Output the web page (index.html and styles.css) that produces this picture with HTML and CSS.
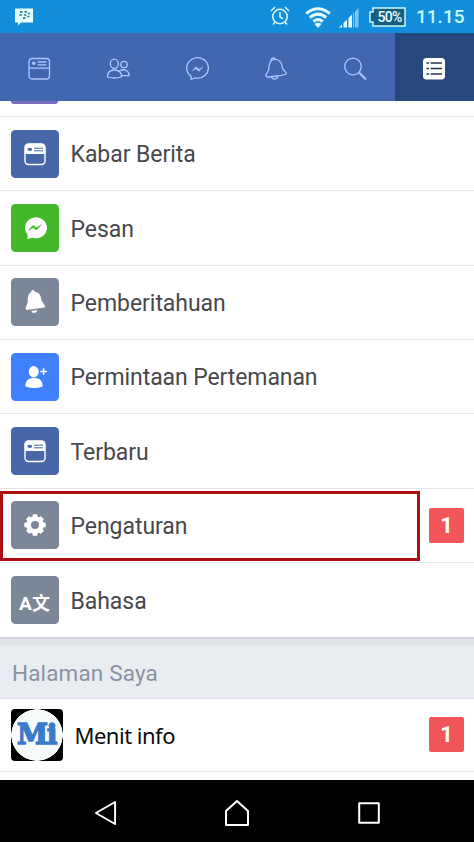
FILE: index.html
```html
<!DOCTYPE html>
<html lang="id">
<head>
<meta charset="utf-8">
<title>Menu</title>
<link rel="stylesheet" href="styles.css">
</head>
<body>
<svg class="defs" aria-hidden="true">
  <defs>
    <symbol id="feed" viewBox="0 0 24 24">
      <rect x="2" y="2" width="20" height="20.5" rx="3.5" fill="none" stroke="#fff" stroke-width="1.4"/>
      <path d="M1.800 12V5.500a3.700 3.700 0 0 1 3.700-3.700h13a3.700 3.700 0 0 1 3.700 3.700V12z" fill="#fff"/>
      <ellipse cx="6.800" cy="7.300" rx="2.400" ry="1.600" fill="#4867a8"/>
      <path d="M11 6.200h9M11 8.800h9" stroke="#4867a8" stroke-width="1"/>
    </symbol>
  </defs>
</svg>
<div class="screen">
  <div class="status">
    <svg class="bbm" viewBox="0 0 18 18"><path d="M0 .5h18v14H6L3 17.500v-3H0z" fill="#e6ffff"/><path d="M5 3.800h2.500M9.500 3.800H12M4.300 7h2.500M8.800 7h2.500M8 10.200h2.500M12.700 5.500h2.200M12.200 8.500h2.200" stroke="#237f9d" stroke-width="1.700"/></svg>
    <svg class="alarm" viewBox="0 0 20 20"><g fill="none" stroke="#d9fbff" stroke-width="1.500"><circle cx="10" cy="10.500" r="7.200"/><path d="M10 6v4.800l3 2M1 5l4-4M15 1l4 4M5 16l-2 2.500M15 16l2 2.500"/></g></svg>
    <svg class="wifi" viewBox="0 0 26 21"><g fill="none" stroke="#e2fdff" stroke-width="3"><path d="M1.200 6.500Q13-3 24.800 6.500M4.800 10.500q8.200-6.800 16.400 0M8.300 14.500q4.700-4 9.400 0"/></g><path d="M9.500 17q3.500-3 7 0L13 21z" fill="#e2fdff"/></svg>
    <svg class="signal" viewBox="0 0 20 20"><path d="M0 19.500l3-3v3zM4.500 15l3.500-3.500v8H4.500zM9.500 10l3.500-3.500v13H9.500z" fill="#e2fdff"/><path d="M14 5.500L15.200 4.300V19.500H14zM16 3.500L19.500 0v19.500H16z" fill="#7bc4ee"/></svg>
    <span class="battery"><svg viewBox="0 0 37 20"><path d="M4 1h32v18H4v-4H1V5h3z" fill="#155f83" stroke="#c9f6f5" stroke-width="1.500"/></svg><b>50%</b></span>
    <span class="clock">11.15</span>
  </div>
  <div class="tabs">
    <div class="tab"><svg viewBox="0 0 24 24"><rect x="2" y="1.500" width="20.500" height="20.500" rx="3"/><path d="M2 11.200h20.500M10.800 5h8.500M10.800 7.800h8.500"/><circle cx="6.800" cy="6.300" r="1.700" class="solid"/></svg></div>
    <div class="tab"><svg viewBox="0 0 24 24"><ellipse cx="8.300" cy="6.800" rx="4" ry="4.600"/><circle cx="18" cy="7.500" r="3.200"/><path d="M1.500 20c0-4.500 2.500-7 7-7s7 2.500 7 7q-7 2-14 0zM13.500 13.500c5.500-2 9.500.2 9.700 5.200h-7.500"/></svg></div>
    <div class="tab"><svg viewBox="0 0 24 24"><path d="M6 22.300v-3.200A10.800 10.200 0 1 1 10.500 21z"/><path d="M6.500 14.500l4.500-5 3 2.500 4.500-2.500-4.500 5-3-2.500z" class="solid"/></svg></div>
    <div class="tab"><svg viewBox="0 0 24 24"><path d="M8.500 3c5.500-2 9.300 1.500 10 8.500l3.700 4.300c.5 2-1.700 2-4.700 2.500L4.500 20c-2.300.3-3.300-1.500-2-3l2.300-4.500C5 7 5.500 4 8.500 3zM7 3.300C7 .5 11 .3 11.500 2.500M7.500 20c1 3 6 2.500 6.300-1"/></svg></div>
    <div class="tab"><svg viewBox="0 0 24 24"><circle cx="10" cy="9.500" r="8.300"/><path d="M16 15.500l7 7" stroke-width="2"/></svg></div>
    <div class="tab active"><svg viewBox="0 0 24 24"><rect x="1" y="1" width="22" height="21.500" rx="3.500" class="plate"/><path d="M8.500 6H20M8.500 11.500H20M8.500 17H20M4.500 6H7M4.500 11.500H7M4.500 17H7" class="lines"/></svg></div>
  </div>
  <div class="peek"><span></span></div>
  <div class="row"><span class="tile blue"><svg class="feedic"><use href="#feed"/></svg></span><span class="label">Kabar Berita</span></div>
  <div class="row"><span class="tile green"><svg viewBox="0 0 24 24"><path d="M4.500 23v-4.500A11 10.500 0 1 1 9.500 21.800z" fill="#fff"/><path d="M5.500 14.200l4.500-4.700 3.200 2.300 5-2.800-5 4.900-3-2.400z" fill="#42b72a" stroke="#42b72a" stroke-width=".6"/></svg></span><span class="label">Pesan</span></div>
  <div class="row"><span class="tile gray"><svg viewBox="0 0 24 24"><path d="M8.300 2C8-.5 11.500-.5 11.600 1.700c4.800.6 6.400 4 6.900 8.800l3.500 5.300-.3 1.700L3.500 20l-1-1.500 2.200-6.300C4.700 6.500 5 3.500 8.300 2zM8.300 21l6-1c-.3 3.500-5 4-6 1z" fill="#fff"/></svg></span><span class="label">Pemberitahuan</span></div>
  <div class="row"><span class="tile bright"><svg viewBox="0 0 24 24"><ellipse cx="10.700" cy="6.800" rx="5" ry="5.700" fill="#fff"/><path d="M2.300 21.500c0-6 3.200-8.500 8.700-8.500s8.700 2.500 8.700 8.500q-8.700 3-17.400 0z" fill="#fff"/><path d="M17.200 6.500H24M20.600 3.300v6.400" stroke="#fff" stroke-width="1.500"/></svg></span><span class="label wide">Permintaan Pertemanan</span></div>
  <div class="row"><span class="tile blue"><svg class="feedic"><use href="#feed"/></svg></span><span class="label">Terbaru</span></div>
  <div class="row marked"><span class="tile gray"><svg viewBox="0 0 24 24"><circle cx="12" cy="12" r="6.500" fill="none" stroke="#fff" stroke-width="5"/><path d="M12 1.300v4M12 18.700v4M1.300 12h4M18.700 12h4M4.600 4.600l2.500 2.500M16.900 16.900l2.500 2.500M4.600 19.400l2.500-2.500M16.900 7.100l2.500-2.500" stroke="#fff" stroke-width="4.600"/></svg></span><span class="label">Pengaturan</span><span class="badge">1</span></div>
  <div class="row last"><span class="tile gray lang"><b>A</b><b class="han">文</b></span><span class="label">Bahasa</span></div>
  <div class="section">Halaman Saya</div>
  <div class="row page"><span class="avatar"><b>Mi</b></span><span class="label">Menit info</span><span class="badge">1</span></div>
  <div class="gap"></div>
  <div class="keys">
    <svg viewBox="0 0 24 26"><path d="M22 1.500v23L2 13z"/></svg>
    <svg class="home" viewBox="0 0 26 28"><path d="M2 12L13 2l11 10v14H2z"/></svg>
    <svg class="recent" viewBox="0 0 22 22"><path d="M1.200 1.200h19.600v19.600H1.200z"/></svg>
  </div>
</div>
</body>
</html>
```
FILE: styles.css
```css
*, *::after { box-sizing: border-box; }
body { margin: 0; background: #fff; font-family: Roboto, "Liberation Sans", sans-serif; }
.defs { position: absolute; width: 0; height: 0; }
.screen { width: 474px; height: 842px; overflow: hidden; display: flex; flex-direction: column; }
.screen > * { flex: none; }
.status { height: 33px; background: #128edb; display: flex; align-items: flex-start; padding-left: 15px; }
.bbm { width: 18px; height: 18px; margin-top: 8px; }
.alarm { width: 20px; height: 20px; margin: 6px 0 0 237px; }
.wifi { width: 26px; height: 21px; margin: 7px 0 0 15px; }
.signal { width: 20px; height: 20px; margin: 7.500px 0 0 8px; }
.battery { position: relative; width: 37px; height: 20px; margin: 6.500px 0 0 10px; }
.battery svg { display: block; width: 37px; height: 20px; }
.battery b { position: absolute; left: 4px; right: 0; top: 0; text-align: center; font-size: 14px; line-height: 20px; font-weight: 500; letter-spacing: -.8px; color: #e4feff; }
.clock { margin: 6px 0 0 10px; font-size: 19px; line-height: 22px; font-weight: 500; letter-spacing: 0; color: #c5f8ff; }
.tabs { height: 68px; background: #4267b0; display: grid; grid-template-columns: repeat(6, 79px); }
.tab { display: flex; align-items: center; justify-content: center; padding: 3px 2px 0 0; }
.tab svg { width: 24px; height: 24px; fill: none; stroke: #aac8ff; stroke-width: 1.300; stroke-linejoin: round; }
.tab .solid { fill: #aac8ff; stroke: none; }
.active { background: #28477c; }
.tab .plate { fill: #fff; stroke: none; }
.tab .lines { stroke: #28384d; stroke-width: 1.500; }
.peek { height: 16.200px; border-bottom: 1px solid #e4e5e7; padding-left: 11px; }
.peek span { display: block; width: 47px; height: 3px; background: #7b6cc0; border-radius: 0 0 5px 5px; }
.row { height: 74.300px; border-bottom: 1px solid #e4e5e7; display: flex; align-items: center; padding-left: 10.500px; position: relative; }
.tile { width: 48px; height: 48px; border-radius: 4.500px; display: flex; align-items: center; justify-content: center; }
.tile svg { width: 24px; height: 24px; }
.blue { background: #4867a8; }
.green { background: #42b72a; }
.gray { background: #7b8698; }
.bright { background: #4080ff; }
.lang { color: #fff; font-size: 19px; line-height: 20px; padding-top: 7px; }
.lang .han { font-family: "Noto Sans CJK SC", sans-serif; font-size: 18px; margin-top: -4px; }
.label { margin-left: 12px; padding-top: 3px; font-size: 23px; line-height: 30px; letter-spacing: -.05px; color: #47484b; white-space: nowrap; }
.wide { letter-spacing: -.1px; }
.badge { position: absolute; left: 429px; top: 50%; margin-top: -17px; width: 35px; height: 35px; border-radius: 2px; background: #f1575a; color: #fff; font-size: 22px; line-height: 36px; font-weight: 700; text-align: center; }
.marked::after { content: ""; position: absolute; left: 0; top: 2.500px; width: 420px; height: 70px; border: 3px solid #ab0f14; }
.last { border-bottom: 0; }
.section { height: 62px; background: #e9edf2; border-top: 2px solid #cfd3da; border-bottom: 1px solid #dee1e7; box-shadow: inset 0 7px #e1e5ea; padding: 18px 0 0 12px; font-size: 22.500px; line-height: 32px; letter-spacing: .15px; color: #8b92a2; }
.page { height: 73px; }
.avatar { width: 52px; height: 52px; border-radius: 4px; background: radial-gradient(circle, #f7fafb 25.500px, #000 26px); display: flex; align-items: center; justify-content: center; }
.avatar b { font-family: "DejaVu Serif", serif; font-size: 28px; line-height: 52px; color: #3a7ccb; letter-spacing: -1.200px; -webkit-text-stroke: 1.500px #3a7ccb; }
.page .label { padding-top: 0; font-family: "Noto Sans", sans-serif; font-size: 22px; letter-spacing: -.5px; color: #0a0a0a; }
.page .badge { margin-top: -18px; }
.gap { height: 7.500px; }
.keys { flex: 1 0 0; background: #000; display: flex; align-items: flex-start; padding-left: 94px; }
.keys svg { width: 23px; height: 26px; margin-top: 20.500px; fill: none; stroke: #fff; stroke-width: 2; stroke-linejoin: round; }
.keys .home { width: 26px; height: 28px; margin: 19px 0 0 107px; }
.keys .recent { width: 22px; height: 22px; margin: 22.500px 0 0 107.500px; }
```
